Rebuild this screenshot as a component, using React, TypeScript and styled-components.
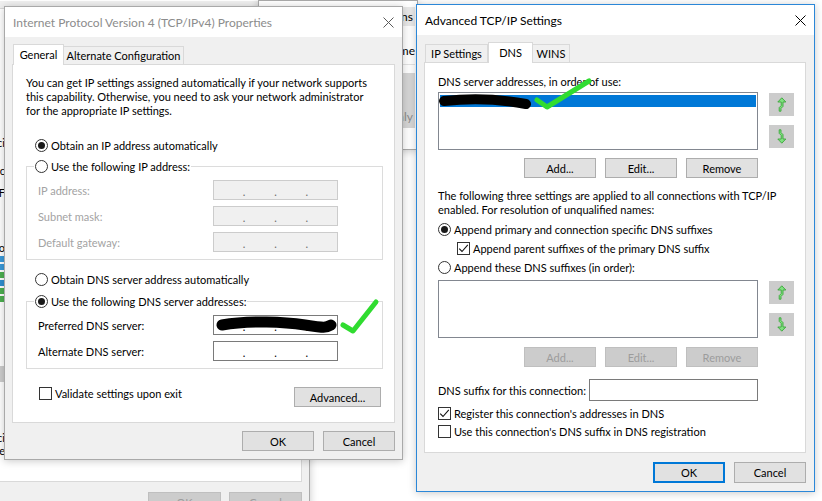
import React from "react"
import styled, { createGlobalStyle } from "styled-components"

const GlobalStyle = createGlobalStyle`
  html, body { margin: 0; padding: 0; background: #ffffff; }
  body { font-family: Lato, "Liberation Sans", sans-serif; font-size: 11px; color: #000; }
  * { box-sizing: border-box; }
  button { font-family: inherit; font-size: 11px; }
`

const Desktop = styled.div`
  position: relative;
  width: 822px;
  height: 501px;
  overflow: hidden;
  background: #ffffff;
`

// windows lie on a free desktop canvas, so they are placed by coordinates
const Window = styled.div<{ $x: number; $y: number; $w: number; $h: number; $active?: boolean }>`
  position: absolute;
  left: ${(p) => p.$x}px;
  top: ${(p) => p.$y}px;
  width: ${(p) => p.$w}px;
  height: ${(p) => p.$h}px;
  display: flex;
  flex-direction: column;
  background: #f0f0f0;
  border: 1px solid ${(p) => (p.$active ? "#2b87d8" : "#a9a9a9")};
  box-shadow: 0 1px 8px rgba(0, 0, 0, 0.22);
`

const TitleBar = styled.div<{ $active?: boolean }>`
  flex: none;
  height: 30px;
  display: flex;
  align-items: center;
  justify-content: space-between;
  padding-left: 8px;
  background: #ffffff;
  font-size: 12px;
  color: ${(p) => (p.$active ? "#000" : "#8c8c8c")};
  white-space: nowrap;
`

const CloseBox = styled.div`
  width: 28px;
  height: 30px;
  display: flex;
  align-items: center;
  justify-content: center;
`

const WindowBody = styled.div<{ $pr?: number }>`
  flex: 1;
  min-height: 0;
  display: flex;
  flex-direction: column;
  padding: 7px ${(p) => p.$pr ?? 7}px 0 7px;
`

const TabStrip = styled.div`
  flex: none;
  height: 21px;
  margin-bottom: -1px;
  padding-left: 1px;
  display: flex;
  align-items: flex-start;
  position: relative;
  z-index: 1;
`

const Tab = styled.div<{ $selected?: boolean; $w: number }>`
  width: ${(p) => p.$w}px;
  height: ${(p) => (p.$selected ? 21 : 18)}px;
  margin-top: ${(p) => (p.$selected ? 0 : 2)}px;
  display: flex;
  align-items: center;
  justify-content: center;
  padding-bottom: ${(p) => (p.$selected ? 2 : 0)}px;
  border: 1px solid #d9d9d9;
  border-bottom: none;
  margin-left: ${(p) => (p.$selected ? 0 : -1)}px;
  background: ${(p) => (p.$selected ? "#ffffff" : "#f0f0f0")};
  white-space: nowrap;
  &:first-child {
    margin-left: 0;
  }
`

const TabPanel = styled.div<{ $pad: string }>`
  flex: 1;
  min-height: 0;
  display: flex;
  flex-direction: column;
  align-items: flex-start;
  padding: ${(p) => p.$pad};
  background: #ffffff;
  border: 1px solid #d9d9d9;
`

const Footer = styled.div<{ $pt: number; $h: number }>`
  flex: none;
  height: ${(p) => p.$h}px;
  padding-top: ${(p) => p.$pt}px;
  display: flex;
  justify-content: flex-end;
  align-items: flex-start;
  gap: 9px;
`

const Button = styled.button<{ $w?: number; $h?: number; $default?: boolean }>`
  width: ${(p) => p.$w ?? 72}px;
  height: ${(p) => p.$h ?? 20}px;
  padding: 0;
  margin: 0;
  background: #e1e1e1;
  color: #000;
  border: ${(p) => (p.$default ? "2px solid #0078d7" : "1px solid #adadad")};
  &:disabled {
    background: #cccccc;
    border-color: #bfbfbf;
    color: #9c9c9c;
  }
`

const Paragraph = styled.div<{ $mt?: number }>`
  margin-top: ${(p) => p.$mt ?? 0}px;
  line-height: 14px;
  white-space: nowrap;
`

const Caption = styled.div`
  line-height: 12px;
  white-space: nowrap;
`

const OptionRow = styled.label<{ $h?: number; $mt?: number; $indent?: number }>`
  display: flex;
  align-items: center;
  gap: 3px;
  height: ${(p) => p.$h ?? 20}px;
  margin-top: ${(p) => p.$mt ?? 0}px;
  padding-left: ${(p) => p.$indent ?? 0}px;
  white-space: nowrap;
`

const RadioCircle = styled.span<{ $checked?: boolean }>`
  flex: none;
  width: 13px;
  height: 13px;
  border-radius: 50%;
  border: 1px solid #333333;
  background: #ffffff;
  display: flex;
  align-items: center;
  justify-content: center;
  &::after {
    content: "";
    width: 7px;
    height: 7px;
    border-radius: 50%;
    background: #1a1a1a;
    display: ${(p) => (p.$checked ? "block" : "none")};
  }
`

const CheckBoxBox = styled.span`
  flex: none;
  width: 13px;
  height: 13px;
  border: 1px solid #333333;
  background: #ffffff;
  display: flex;
  align-items: center;
  justify-content: center;
`

const Group = styled.fieldset<{ $mt?: number }>`
  align-self: stretch;
  margin: ${(p) => p.$mt ?? 0}px 0 0;
  padding: 0;
  min-width: 0;
  border: 1px solid #dcdcdc;
`

const GroupLegend = styled.legend`
  margin-left: 7px;
  padding: 0 1px;
`

const GroupBody = styled.div`
  display: flex;
  flex-direction: column;
  gap: 6px;
  padding: 4px 0 7px 11px;
`

const FieldRow = styled.div<{ $disabled?: boolean }>`
  display: grid;
  grid-template-columns: 175px 125px;
  align-items: center;
  height: 20px;
  color: ${(p) => (p.$disabled ? "#a3a3a3" : "#000")};
`

const IpBox = styled.div<{ $disabled?: boolean }>`
  width: 125px;
  height: 20px;
  display: flex;
  align-items: center;
  justify-content: space-evenly;
  padding-top: 2px;
  border: 1px solid ${(p) => (p.$disabled ? "#cccccc" : "#7a7a7a")};
  background: ${(p) => (p.$disabled ? "#f0f0f0" : "#ffffff")};
  color: ${(p) => (p.$disabled ? "#6d6d6d" : "#000")};
`

const BottomRow = styled.div`
  align-self: stretch;
  margin-top: 18px;
  padding-right: 2px;
  display: flex;
  justify-content: space-between;
  align-items: flex-start;
`

const ListRow = styled.div<{ $mt: number }>`
  margin-top: ${(p) => p.$mt}px;
  display: flex;
  align-items: flex-start;
  gap: 11px;
`

const ListBox = styled.div`
  width: 320px;
  height: 58px;
  padding: 2px 1px;
  border: 1px solid #828790;
  background: #ffffff;
`

const SelectedItem = styled.div`
  height: 12px;
  background: #0078d7;
`

const SideButtons = styled.div`
  margin-top: 1px;
  display: flex;
  flex-direction: column;
  gap: 9px;
`

const ArrowButton = styled.div`
  width: 25px;
  height: 23px;
  background: #cccccc;
  display: flex;
  align-items: center;
  justify-content: center;
`

const ButtonRow = styled.div<{ $mt: number }>`
  width: 320px;
  margin-top: ${(p) => p.$mt}px;
  display: flex;
  justify-content: flex-end;
  gap: 9px;
`

const SuffixRow = styled.div`
  width: 320px;
  margin-top: 12px;
  display: flex;
  align-items: center;
  justify-content: space-between;
  white-space: nowrap;
`

const TextInput = styled.div`
  width: 169px;
  height: 22px;
  border: 1px solid #7a7a7a;
  background: #ffffff;
`

/* windows behind the dialogs */

const BackPanel = styled.div`
  flex: 1;
  display: flex;
  flex-direction: column;
  align-items: flex-end;
  padding-right: 296px;
  background: #ffffff;
  border: 1px solid #d9d9d9;
`

const EdgeText = styled.div<{ $mt: number }>`
  margin-top: ${(p) => p.$mt}px;
  line-height: 12px;
  white-space: nowrap;
`

const EdgeIcon = styled.div<{ $color: string }>`
  margin-top: 2px;
  width: 10px;
  height: 6px;
  background: ${(p) => p.$color};
`

const EdgeBlock = styled.div`
  margin-top: 64px;
  width: 12px;
  height: 16px;
  background: #cccccc;
`

const BackFooter = styled.div`
  flex: none;
  height: 38px;
  padding-top: 10px;
  display: flex;
  justify-content: flex-end;
  gap: 8px;
`

const BackContent = styled.div`
  flex: 1;
  display: flex;
  flex-direction: column;
  align-items: flex-end;
  background: #ffffff;
  padding-right: 2px;
`

const BackHeader = styled.div`
  align-self: stretch;
  margin-top: 6px;
  height: 19px;
  padding-right: 2px;
  display: flex;
  align-items: center;
  justify-content: flex-end;
  background: #e9e9e9;
  font-size: 12px;
`

const BackLine = styled.div`
  margin-top: 17px;
  font-size: 12px;
  white-space: nowrap;
`

const BackRule = styled.div`
  align-self: stretch;
  margin-top: 6px;
  height: 1px;
  background: #e3e3e3;
`

const BackBlock = styled.div`
  align-self: stretch;
  margin-top: 8px;
  height: 55px;
  padding: 0 2px 4px 0;
  display: flex;
  align-items: flex-end;
  justify-content: flex-end;
  background: #d6d6d6;
  color: #8d8d8d;
  font-size: 12px;
`

const Annotations = styled.svg`
  position: absolute;
  left: 0;
  top: 0;
  pointer-events: none;
`

const CloseIcon = ({ color }: { color: string }) => (
  <svg width="11" height="11" viewBox="0 0 11 11">
    <path d="M0.5 0.5 L10.5 10.5 M10.5 0.5 L0.5 10.5" stroke={color} strokeWidth="1" fill="none" />
  </svg>
)

const Radio = ({ checked }: { checked?: boolean }) => <RadioCircle $checked={checked} />

const Check = ({ checked }: { checked?: boolean }) => (
  <CheckBoxBox>
    {checked && (
      <svg width="11" height="11" viewBox="0 0 11 11">
        <path d="M1.2 5.6 L4 8.5 L9.8 1.8" fill="none" stroke="#111" strokeWidth="1.1" />
      </svg>
    )}
  </CheckBoxBox>
)

const ArrowIcon = ({ down }: { down?: boolean }) => (
  <svg width="11" height="15" viewBox="0 0 11 15">
    <g transform={down ? "translate(0 15) scale(1 -1)" : undefined}>
      <path
        d="M5.8 0.8 L9.8 5 H7 V9.4 L5 11.4 V14.2 H3.2 V10.6 L5.2 8.6 V5 H1.8 Z"
        fill="#7fe07f"
        stroke="#3aa63a"
        strokeWidth="0.9"
        strokeLinejoin="round"
      />
    </g>
  </svg>
)

const IpField = ({ disabled }: { disabled?: boolean }) => (
  <IpBox $disabled={disabled}>
    <span>.</span>
    <span>.</span>
    <span>.</span>
  </IpBox>
)

const EthernetWindow = () => (
  <Window $x={-20} $y={-30} $w={330} $h={551}>
    <TitleBar />
    <WindowBody>
      <BackPanel>
        <EdgeText $mt={128}>ci</EdgeText>
        <EdgeText $mt={16}>c</EdgeText>
        <EdgeText $mt={10}>F</EdgeText>
        <EdgeText $mt={43}>o</EdgeText>
        <EdgeIcon $color="#3a9ad9" />
        <EdgeIcon $color="#3a9ad9" />
        <EdgeIcon $color="#4caf50" />
        <EdgeIcon $color="#2f8fd0" />
        <EdgeIcon $color="#4caf50" />
        <EdgeIcon $color="#4caf50" />
        <EdgeBlock />
        <EdgeText $mt={50}>ci</EdgeText>
        <EdgeText $mt={1}>ne</EdgeText>
      </BackPanel>
      <BackFooter>
        <Button disabled $w={73}>OK</Button>
        <Button disabled $w={73}>Cancel</Button>
      </BackFooter>
    </WindowBody>
  </Window>
)

const ConnectionsWindow = () => (
  <Window $x={258} $y={0} $w={160} $h={150}>
    <BackContent>
      <BackHeader>Connections</BackHeader>
      <BackLine>Name</BackLine>
      <BackRule />
      <BackBlock>Only</BackBlock>
    </BackContent>
  </Window>
)

const Ipv4Dialog = () => (
  <Window $x={4} $y={6} $w={399} $h={454}>
    <TitleBar>
      <span>Internet Protocol Version 4 (TCP/IPv4) Properties</span>
      <CloseBox>
        <CloseIcon color="#5a5a5a" />
      </CloseBox>
    </TitleBar>
    <WindowBody>
      <TabStrip>
        <Tab $selected $w={51}>General</Tab>
        <Tab $w={121}>Alternate Configuration</Tab>
      </TabStrip>
      <TabPanel $pad="11px 11px 0 13px">
        <Paragraph>
          You can get IP settings assigned automatically if your network supports
          <br />
          this capability. Otherwise, you need to ask your network administrator
          <br />
          for the appropriate IP settings.
        </Paragraph>
        <OptionRow $mt={17} $indent={9}>
          <Radio checked />
          Obtain an IP address automatically
        </OptionRow>
        <Group $mt={1}>
          <GroupLegend>
            <OptionRow>
              <Radio />
              Use the following IP address:
            </OptionRow>
          </GroupLegend>
          <GroupBody>
            <FieldRow $disabled>
              IP address:
              <IpField disabled />
            </FieldRow>
            <FieldRow $disabled>
              Subnet mask:
              <IpField disabled />
            </FieldRow>
            <FieldRow $disabled>
              Default gateway:
              <IpField disabled />
            </FieldRow>
          </GroupBody>
        </Group>
        <OptionRow $mt={9} $indent={9}>
          <Radio />
          Obtain DNS server address automatically
        </OptionRow>
        <Group $mt={2}>
          <GroupLegend>
            <OptionRow>
              <Radio checked />
              Use the following DNS server addresses:
            </OptionRow>
          </GroupLegend>
          <GroupBody>
            <FieldRow>
              Preferred DNS server:
              <IpField />
            </FieldRow>
            <FieldRow>
              Alternate DNS server:
              <IpField />
            </FieldRow>
          </GroupBody>
        </Group>
        <BottomRow>
          <OptionRow $h={13} $indent={13}>
            <Check />
            Validate settings upon exit
          </OptionRow>
          <Button $w={87}>Advanced...</Button>
        </BottomRow>
      </TabPanel>
      <Footer $pt={8} $h={36}>
        <Button>OK</Button>
        <Button>Cancel</Button>
      </Footer>
    </WindowBody>
  </Window>
)

const AdvancedDialog = () => (
  <Window $x={416} $y={4} $w={399} $h={488} $active>
    <TitleBar $active>
      <span>Advanced TCP/IP Settings</span>
      <CloseBox>
        <CloseIcon color="#000" />
      </CloseBox>
    </TitleBar>
    <WindowBody $pr={8}>
      <TabStrip>
        <Tab $w={63}>IP Settings</Tab>
        <Tab $selected $w={45}>DNS</Tab>
        <Tab $w={38}>WINS</Tab>
      </TabStrip>
      <TabPanel $pad="13px 0 0 13px">
        <Caption>DNS server addresses, in order of use:</Caption>
        <ListRow $mt={4}>
          <ListBox>
            <SelectedItem />
          </ListBox>
          <SideButtons>
            <ArrowButton>
              <ArrowIcon />
            </ArrowButton>
            <ArrowButton>
              <ArrowIcon down />
            </ArrowButton>
          </SideButtons>
        </ListRow>
        <ButtonRow $mt={8}>
          <Button>Add...</Button>
          <Button>Edit...</Button>
          <Button>Remove</Button>
        </ButtonRow>
        <Paragraph $mt={11}>
          The following three settings are applied to all connections with TCP/IP
          <br />
          enabled. For resolution of unqualified names:
        </Paragraph>
        <OptionRow $h={19} $mt={3}>
          <Radio checked />
          Append primary and connection specific DNS suffixes
        </OptionRow>
        <OptionRow $h={19} $indent={19}>
          <Check checked />
          Append parent suffixes of the primary DNS suffix
        </OptionRow>
        <OptionRow $h={19}>
          <Radio />
          Append these DNS suffixes (in order):
        </OptionRow>
        <ListRow $mt={3}>
          <ListBox />
          <SideButtons>
            <ArrowButton>
              <ArrowIcon />
            </ArrowButton>
            <ArrowButton>
              <ArrowIcon down />
            </ArrowButton>
          </SideButtons>
        </ListRow>
        <ButtonRow $mt={9}>
          <Button disabled>Add...</Button>
          <Button disabled>Edit...</Button>
          <Button disabled>Remove</Button>
        </ButtonRow>
        <SuffixRow>
          DNS suffix for this connection:
          <TextInput />
        </SuffixRow>
        <OptionRow $h={18} $mt={3}>
          <Check checked />
          Register this connection's addresses in DNS
        </OptionRow>
        <OptionRow $h={18}>
          <Check />
          Use this connection's DNS suffix in DNS registration
        </OptionRow>
      </TabPanel>
      <Footer $pt={9} $h={38}>
        <Button $h={21} $default>OK</Button>
        <Button $h={21}>Cancel</Button>
      </Footer>
    </WindowBody>
  </Window>
)

export default function App() {
  return (
    <>
      <GlobalStyle />
      <Desktop>
        <EthernetWindow />
        <ConnectionsWindow />
        <Ipv4Dialog />
        <AdvancedDialog />
        {/* redaction marks and check marks drawn over the screenshot */}
        <Annotations width="822" height="501" viewBox="0 0 822 501">
          <path
            d="M222 325 C 250 320, 285 322, 305 325 S 326 328, 331 325"
            stroke="#000"
            strokeWidth="11"
            strokeLinecap="round"
            fill="none"
          />
          <path
            d="M444 101 C 470 98, 500 99, 526 104"
            stroke="#000"
            strokeWidth="10"
            strokeLinecap="round"
            fill="none"
          />
          <path
            d="M343 325 L353 331 L376 302"
            stroke="#30dc30"
            strokeWidth="5"
            strokeLinecap="round"
            strokeLinejoin="round"
            fill="none"
          />
          <path
            d="M537 100 L547 107 L589 81"
            stroke="#30dc30"
            strokeWidth="5"
            strokeLinecap="round"
            strokeLinejoin="round"
            fill="none"
          />
        </Annotations>
      </Desktop>
    </>
  )
}
